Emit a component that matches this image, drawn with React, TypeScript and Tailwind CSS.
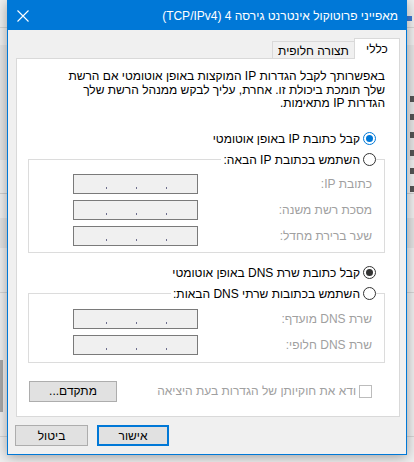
import React from "react";

const Radio = ({ checked = false, blue = false }: { checked?: boolean; blue?: boolean }) => (
  <span
    className={
      blue
        ? "flex items-center justify-center w-[13px] h-[13px] rounded-full border border-[#0078d7] bg-white shrink-0"
        : "flex items-center justify-center w-[13px] h-[13px] rounded-full border border-[#333333] bg-white shrink-0"
    }
  >
    {checked && (
      <span className={blue ? "w-[7px] h-[7px] rounded-full bg-[#0078d7]" : "w-[7px] h-[7px] rounded-full bg-[#333333]"} />
    )}
  </span>
);

const IpBox = () => (
  <div dir="ltr" className="flex items-end w-[125px] h-[20px] border border-[#7a7a7a] bg-[#f0f0f0] pl-[32px] pb-[4px] gap-[29px]">
    <span className="w-px h-[2px] bg-[#6d6d8d]" />
    <span className="w-px h-[2px] bg-[#6d6d8d]" />
    <span className="w-px h-[2px] bg-[#6d6d8d]" />
  </div>
);

const FieldRow = ({ label }: { label: string }) => (
  <div className="flex items-center justify-between h-[20px]">
    <span className="text-[#a0a0a0]">{label}</span>
    <IpBox />
  </div>
);

const App = () => {
  return (
    <div className="relative w-[414px] h-[462px] overflow-hidden bg-[#f0f0f0] font-['Liberation_Sans','DejaVu_Sans',sans-serif] text-[12px] leading-[16px] text-black">
      {/* window behind the dialog */}
      <div className="absolute left-0 top-[27px] w-full h-px bg-[#d6d6d6]" />
      <div className="absolute left-0 top-[45px] w-full h-[115px] bg-[#e6e6e6]" />
      <div className="absolute left-0 top-[193px] w-full h-px bg-[#d0d0d0]" />
      <div className="absolute left-0 top-[218px] w-full h-[30px] bg-[#e4e4e4]" />
      <div className="absolute left-0 top-[292px] w-full h-px bg-[#d6d6d6]" />
      <div className="absolute left-0 top-[360px] w-[3px] h-[52px] bg-[#a8a8a8]" />
      <div className="absolute left-0 top-[436px] w-full h-px bg-[#d6d6d6]" />
      <div className="absolute right-[2px] top-[16px] w-[5px] h-[5px] bg-[#3a7bd5]" />
      <div className="absolute right-0 top-[96px] w-[4px] flex flex-col gap-[12px]">
        <span className="h-[6px] bg-[#555555]" />
        <span className="h-[6px] bg-[#555555]" />
        <span className="h-[6px] bg-[#555555]" />
        <span className="h-[6px] bg-[#555555]" />
        <span className="h-[6px] bg-[#555555]" />
        <span className="h-[6px] bg-[#555555]" />
      </div>

      <div className="relative flex pl-[7px]">
        <div
          dir="rtl"
          className="flex flex-col w-[400px] h-[455px] border border-[#0078d7] bg-[#f0f0f0] shadow-[0_2px_12px_rgba(0,0,0,0.35)]"
        >
          {/* title bar */}
          <div className="flex items-center justify-between h-[29px] bg-[#0078d7] text-white pr-[8px] pl-[9px]">
            <span>מאפייני פרוטוקול אינטרנט גירסה 4 (TCP/IPv4)</span>
            <svg width="12" height="12" viewBox="0 0 12 12" className="mt-[1px]">
              <path d="M0.5 0.5 L11.5 11.5 M11.5 0.5 L0.5 11.5" stroke="white" strokeWidth="1.1" fill="none" />
            </svg>
          </div>

          <div className="flex flex-col pt-[8px] pr-[6px] pl-[8px]">
            {/* tabs */}
            <div className="flex items-end h-[20px]">
              <div className="relative z-10 flex items-center justify-center w-[46px] h-[21px] -mb-px bg-white border-t border-x border-[#d9d9d9]">
                כללי
              </div>
              <div className="flex items-center justify-center w-[82px] h-[17px] border-t border-l border-[#d9d9d9] pt-px">
                תצורה חלופית
              </div>
            </div>

            {/* panel */}
            <div className="flex flex-col h-[359px] bg-white border border-[#d9d9d9] pt-[11px] pr-[14px] pl-[11px]">
              <p className="leading-[13.5px]">
                באפשרותך לקבל הגדרות IP המוקצות באופן אוטומטי אם הרשת
                <br />
                שלך תומכת ביכולת זו. אחרת, עליך לבקש ממנהל הרשת שלך
                <br />
                הגדרות IP מתאימות.
              </p>

              <div className="flex items-center gap-[3px] h-[16px] mt-[20px] pr-[9px]">
                <Radio checked blue />
                <span>קבל כתובת IP באופן אוטומטי</span>
              </div>

              <fieldset className="mt-[5px] border border-[#dcdcdc] pr-[8px] pl-[44px]">
                <legend className="flex items-center gap-[3px] h-[16px] pl-[2px]">
                  <Radio />
                  <span>השתמש בכתובת IP הבאה:</span>
                </legend>
                <div className="flex flex-col gap-[6px] pt-[6px] pb-[6px] pr-[4px]">
                  <FieldRow label="כתובת IP:" />
                  <FieldRow label="מסכת רשת משנה:" />
                  <FieldRow label="שער ברירת מחדל:" />
                </div>
              </fieldset>

              <div className="flex items-center gap-[3px] h-[16px] mt-[12px] pr-[9px]">
                <Radio checked />
                <span>קבל כתובת שרת DNS באופן אוטומטי</span>
              </div>

              <fieldset className="mt-[5px] border border-[#dcdcdc] pr-[8px] pl-[44px]">
                <legend className="flex items-center gap-[3px] h-[16px] pl-[2px]">
                  <Radio />
                  <span>השתמש בכתובות שרתי DNS הבאות:</span>
                </legend>
                <div className="flex flex-col gap-[6px] pt-[7px] pb-[7px] pr-[4px]">
                  <FieldRow label="שרת DNS מועדף:" />
                  <FieldRow label="שרת DNS חלופי:" />
                </div>
              </fieldset>

              <div className="flex items-center justify-between mt-[18px] pr-[13px] pl-px">
                <div className="flex items-center gap-[3px]">
                  <span className="w-[13px] h-[13px] border border-[#bcbcbc] bg-white shrink-0" />
                  <span className="text-[#a0a0a0]">ודא את חוקיותן של הגדרות בעת היציאה</span>
                </div>
                <button className="flex items-center justify-center w-[88px] h-[21px] bg-[#e1e1e1] border border-[#adadad]">
                  מתקדם...
                </button>
              </div>
            </div>
          </div>

          {/* dialog buttons */}
          <div className="flex justify-end gap-[9px] mt-[8px] pl-[7px]">
            <button className="flex items-center justify-center w-[72px] h-[21px] bg-[#e1e1e1] border-2 border-[#0078d7]">
              אישור
            </button>
            <button className="flex items-center justify-center w-[73px] h-[21px] bg-[#e1e1e1] border border-[#adadad]">
              ביטול
            </button>
          </div>
        </div>
      </div>
    </div>
  );
};

export default App;
